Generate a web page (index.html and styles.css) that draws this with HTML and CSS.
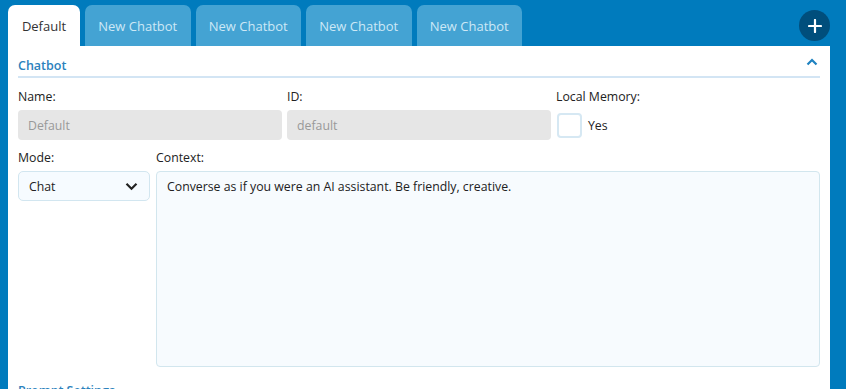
FILE: index.html
```html
<!DOCTYPE html>
<html>
<head>
<meta charset="utf-8">
<link rel="stylesheet" href="styles.css">
</head>
<body>
<div class="app">
  <div class="tabbar">
    <div class="tab active">Default</div>
    <div class="tab">New Chatbot</div>
    <div class="tab">New Chatbot</div>
    <div class="tab">New Chatbot</div>
    <div class="tab">New Chatbot</div>
    <div class="spacer"></div>
    <div class="add"><svg width="14" height="14" viewBox="0 0 14 14"><path d="M7 1v12M1 7h12" stroke="#fff" stroke-width="2.2" stroke-linecap="round"/></svg></div>
  </div>
  <div class="panel">
    <div class="section-head">
      <span class="section-title">Chatbot</span>
      <svg class="chev" width="12" height="8" viewBox="0 0 12 8"><path d="M1.5 6.5L6 2l4.5 4.5" fill="none" stroke="#1f82c0" stroke-width="2.2"/></svg>
    </div>
    <div class="row3">
      <div class="field">
        <label>Name:</label>
        <div class="input disabled">Default</div>
      </div>
      <div class="field">
        <label>ID:</label>
        <div class="input disabled">default</div>
      </div>
      <div class="field">
        <label>Local Memory:</label>
        <div class="check"><span class="box"></span><span>Yes</span></div>
      </div>
    </div>
    <div class="row2">
      <div class="field mode">
        <label>Mode:</label>
        <div class="select"><span>Chat</span><svg width="13" height="9" viewBox="0 0 13 9"><path d="M1.5 1.8L6.5 6.8l5-5" fill="none" stroke="#222" stroke-width="2.2"/></svg></div>
      </div>
      <div class="field context">
        <label>Context:</label>
        <div class="textarea">Converse as if you were an AI assistant. Be friendly, creative.</div>
      </div>
    </div>
    <div class="section-title next">Prompt Settings</div>
  </div>
</div>
</body>
</html>
```
FILE: styles.css
```css
* { box-sizing: border-box; }
html, body { margin: 0; padding: 0; }
body {
  background: #007bbd;
  font-family: "Open Sans", "Noto Sans", sans-serif;
  font-size: 12px;
  color: #222;
  width: 846px;
  height: 389px;
  overflow: hidden;
}
.app { padding: 0 16px 0 8px; }
.tabbar {
  display: flex;
  align-items: flex-end;
  height: 46px;
  gap: 5px;
}
.tab {
  height: 41px;
  display: flex;
  align-items: center;
  justify-content: center;
  border-radius: 7px 7px 0 0;
  background: #44a3d3;
  color: #cde8f6;
  font-size: 13px;
  width: 105.5px;
  white-space: nowrap;
}
.tab.active {
  background: #fff;
  color: #333;
  width: 72px;
}
.spacer { flex: 1; }
.add {
  width: 31px;
  height: 31px;
  border-radius: 50%;
  background: #004e7c;
  display: flex;
  align-items: center;
  justify-content: center;
  align-self: flex-start;
  margin-top: 10px;
  margin-right: 0;
}
.panel {
  background: #fff;
  padding: 8px 10px 0 10px;
  height: 343px;
}
.section-head {
  display: flex;
  align-items: center;
  justify-content: space-between;
  border-bottom: 2px solid #d3e5f4;
  height: 24px;
  padding-right: 2px;
}
.section-title {
  color: #2b82bd;
  font-weight: 600;
  font-size: 12.5px;
}
.section-title.next { margin-top: 15px; }
.chev { margin-top: -6px; }
.row3 {
  display: grid;
  grid-template-columns: 1fr 1fr 1fr;
  gap: 5px;
  margin-top: 11px;
}
.field label {
  display: block;
  height: 21px;
  line-height: 16px;
  font-size: 12.3px;
}
.input {
  height: 30px;
  border-radius: 4px;
  padding: 0 10px;
  display: flex;
  align-items: center;
  font-size: 12.3px;
}
.input.disabled { background: #e6e6e6; color: #999; }
.check {
  display: flex;
  align-items: center;
  gap: 6px;
  height: 30px;
  font-size: 12.3px;
}
.box {
  width: 25px;
  height: 25px;
  border: 2px solid #d6e8f3;
  border-radius: 4px;
  margin-left: 1px;
}
.row2 {
  display: flex;
  gap: 6px;
  margin-top: 10px;
}
.mode { width: 132px; }
.context { flex: 1; }
.select {
  height: 30px;
  border: 1px solid #d2e6f0;
  border-radius: 5px;
  background: #f6fbff;
  display: flex;
  align-items: center;
  justify-content: space-between;
  padding: 0 11px 0 10px;
  font-size: 12.3px;
}
.textarea {
  height: 196px;
  border: 1px solid #d2e6ee;
  border-radius: 4px;
  background: #f7fbfe;
  padding: 6px 10px;
  font-size: 12.3px;
  line-height: 18px;
}
```
